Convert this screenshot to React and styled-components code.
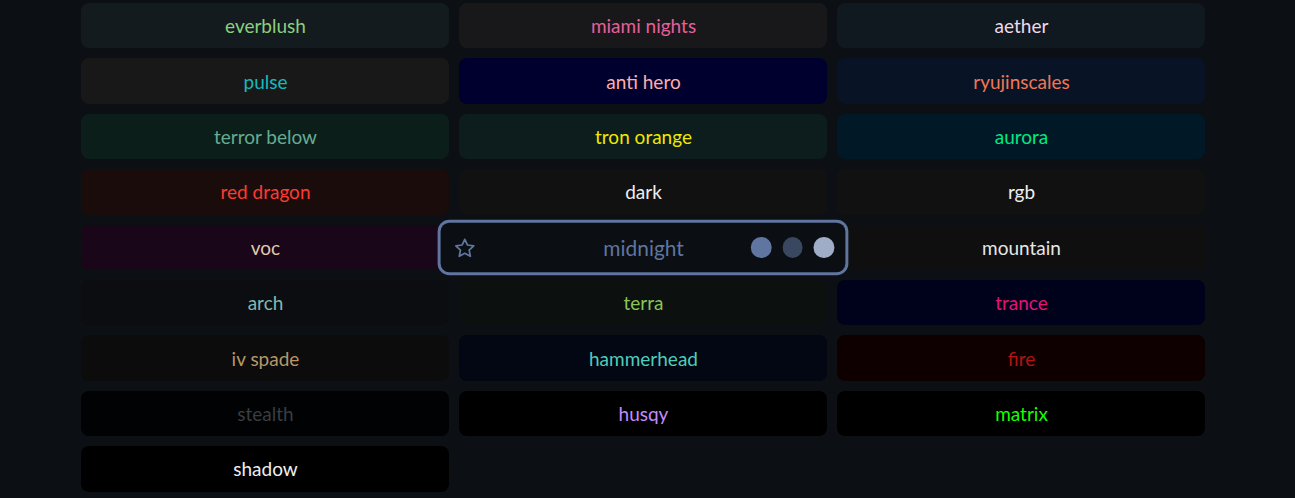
import React from 'react'
import styled, { createGlobalStyle } from 'styled-components'

const GlobalStyle = createGlobalStyle`
  html, body {
    margin: 0;
    padding: 0;
    background: #0c0f13;
    font-family: Lato, "Noto Sans", sans-serif;
  }
`

const themes = [
  { name: 'everblush', bg: '#141b1e', fg: '#8ccf7e' },
  { name: 'miami nights', bg: '#18181a', fg: '#e4609b' },
  { name: 'aether', bg: '#101820', fg: '#eedaea' },
  { name: 'pulse', bg: '#181818', fg: '#17b8bd' },
  { name: 'anti hero', bg: '#00002e', fg: '#ffadad' },
  { name: 'ryujinscales', bg: '#081426', fg: '#f17754' },
  { name: 'terror below', bg: '#0b1e1a', fg: '#66ac92' },
  { name: 'tron orange', bg: '#0d1c1c', fg: '#f0e800' },
  { name: 'aurora', bg: '#011926', fg: '#00e980' },
  { name: 'red dragon', bg: '#1b0c0c', fg: '#ff3a32' },
  { name: 'dark', bg: '#111111', fg: '#eeeeee' },
  { name: 'rgb', bg: '#111111', fg: '#eeeeee' },
  { name: 'voc', bg: '#190618', fg: '#e0caac' },
  {
    name: 'midnight',
    bg: '#0b0e13',
    fg: '#60759f',
    active: true,
    dots: ['#60759f', '#394760', '#9fadc6'],
  },
  { name: 'mountain', bg: '#0f0f0f', fg: '#e7e7e7' },
  { name: 'arch', bg: '#0c0d11', fg: '#7ebab5' },
  { name: 'terra', bg: '#0c100e', fg: '#89c559' },
  { name: 'trance', bg: '#00021b', fg: '#e51376' },
  { name: 'iv spade', bg: '#0c0c0c', fg: '#b7976a' },
  { name: 'hammerhead', bg: '#030613', fg: '#4fcdb9' },
  { name: 'fire', bg: '#0f0000', fg: '#b31313' },
  { name: 'stealth', bg: '#010203', fg: '#383e42' },
  { name: 'husqy', bg: '#000000', fg: '#c58aff' },
  { name: 'matrix', bg: '#000000', fg: '#15ff00' },
  { name: 'shadow', bg: '#000000', fg: '#eeeeee' },
]

const Page = styled.div`
  padding: 3px 0 0 81px;
`

const ThemeGrid = styled.div`
  display: grid;
  grid-template-columns: repeat(3, 368px);
  grid-auto-rows: 45.4px;
  column-gap: 10px;
  row-gap: 10px;
`

const ThemeButton = styled.div`
  position: relative;
  display: grid;
  grid-template-columns: 1fr auto 1fr;
  align-items: center;
  padding: 0 10.5px 0 11.5px;
  border-radius: 8px;
  background: ${p => p.$bg};
  color: ${p => p.$fg};
  font-size: 19px;
  cursor: pointer;
  ${p =>
    p.$active &&
    `
    z-index: 1;
    transform: scale(1.1);
    box-shadow: 0 0 0 2.7px ${p.$fg};
  `}
`

const Name = styled.span`
  grid-column: 2;
  text-align: center;
  white-space: nowrap;
`

const StarSlot = styled.span`
  grid-column: 1;
  display: flex;
  align-items: center;
`

const Dots = styled.span`
  grid-column: 3;
  justify-self: end;
  display: flex;
  gap: 10px;
`

const Dot = styled.span`
  width: 18.5px;
  height: 18.5px;
  border-radius: 50%;
  background: ${p => p.$color};
`

const Star = ({ color }) => (
  <svg width="20" height="20" viewBox="0 0 24 24" fill="none" stroke={color} strokeWidth="1.9" strokeLinejoin="round" strokeLinecap="round">
    <path d="M12 2.5l2.95 6.2 6.8.85-5 4.7 1.3 6.75L12 17.7 5.95 21l1.3-6.75-5-4.7 6.8-.85z" />
  </svg>
)

export default function App() {
  return (
    <>
      <GlobalStyle />
      <Page>
        <ThemeGrid>
          {themes.map(t => (
            <ThemeButton key={t.name} $bg={t.bg} $fg={t.fg} $active={t.active}>
              {t.active && (
                <StarSlot>
                  <Star color={t.fg} />
                </StarSlot>
              )}
              <Name>{t.name}</Name>
              {t.dots && (
                <Dots>
                  {t.dots.map(c => (
                    <Dot key={c} $color={c} />
                  ))}
                </Dots>
              )}
            </ThemeButton>
          ))}
        </ThemeGrid>
      </Page>
    </>
  )
}
